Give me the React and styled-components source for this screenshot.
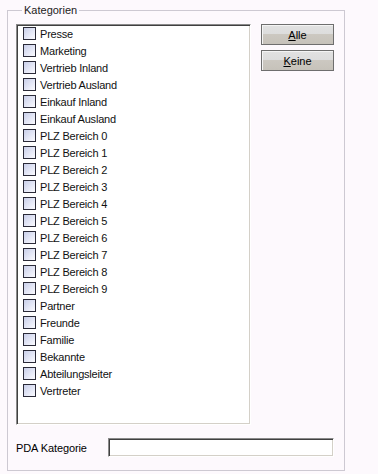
import React from 'react';
import styled, { createGlobalStyle } from 'styled-components';

const GlobalStyle = createGlobalStyle`
  html, body {
    margin: 0;
    padding: 0;
    background: #fdf9fd;
  }
  body {
    font-family: "Liberation Sans", Arial, sans-serif;
    font-size: 11px;
    color: #000;
  }
`;

const Page = styled.div`
  width: 378px;
  height: 474px;
  padding: 4px 0 0 7px;
  box-sizing: border-box;
`;

const GroupBox = styled.fieldset`
  margin: 0;
  width: 338px;
  height: 467px;
  box-sizing: border-box;
  border: 1px solid #cdc9d2;
  padding: 7px 10px 13px 8px;
  display: flex;
  flex-direction: column;
  min-width: 0;
`;

const Legend = styled.legend`
  padding: 0 2px;
  margin-left: 6px;
  line-height: 13px;
  font-size: 11px;
  color: #222;
`;

const TopRow = styled.div`
  display: flex;
  gap: 10px;
  flex: 1;
  min-height: 0;
`;

const sunken = `
  background: #fff;
  border-style: solid;
  border-width: 1px;
  border-color: #8a8a8a #ffffff #ffffff #8a8a8a;
  box-shadow: inset 1px 1px 0 #404040, inset -1px -1px 0 #d4d0c8;
  box-sizing: border-box;
`;

const ListBox = styled.div`
  ${sunken}
  width: 235px;
  height: 401px;
  padding: 0 0 0 6px;
  display: flex;
  flex-direction: column;
`;

const Item = styled.label`
  display: flex;
  align-items: center;
  height: 17px;
  gap: 4px;
  white-space: nowrap;
  letter-spacing: -0.2px;
  color: #111;
`;

const Box = styled.span`
  width: 13px;
  height: 13px;
  box-sizing: border-box;
  border: 1px solid #2a2a38;
  background: linear-gradient(135deg, #c9cfe9 0%, #e4e7f6 55%, #fbfbff 100%);
  flex-shrink: 0;
`;

const ButtonColumn = styled.div`
  display: flex;
  flex-direction: column;
  gap: 5px;
`;

const Button = styled.button`
  width: 73px;
  height: 21px;
  margin: 0;
  padding: 0;
  box-sizing: border-box;
  border: 1px solid #6e6e6e;
  box-shadow: inset 1px 1px 0 #f4f4f4;
  background: linear-gradient(to bottom, #e2e2e2 0%, #dcdcdc 50%, #ccc8c1 50%, #c6c2ba 100%);
  font-family: "Liberation Sans", Arial, sans-serif;
  font-size: 11px;
  color: #000;
  cursor: pointer;

  u {
    text-decoration: underline;
    text-underline-offset: 1px;
  }
`;

const BottomRow = styled.div`
  display: flex;
  align-items: center;
  margin-top: 13px;
`;

const FieldLabel = styled.span`
  width: 92px;
  letter-spacing: -0.1px;
`;

const TextInput = styled.input`
  ${sunken}
  width: 226px;
  height: 19px;
  margin: 0;
  padding: 0 3px;
  font-family: "Liberation Sans", Arial, sans-serif;
  font-size: 11px;
  outline: none;
`;

const categories = [
  'Presse',
  'Marketing',
  'Vertrieb Inland',
  'Vertrieb Ausland',
  'Einkauf Inland',
  'Einkauf Ausland',
  'PLZ Bereich 0',
  'PLZ Bereich 1',
  'PLZ Bereich 2',
  'PLZ Bereich 3',
  'PLZ Bereich 4',
  'PLZ Bereich 5',
  'PLZ Bereich 6',
  'PLZ Bereich 7',
  'PLZ Bereich 8',
  'PLZ Bereich 9',
  'Partner',
  'Freunde',
  'Familie',
  'Bekannte',
  'Abteilungsleiter',
  'Vertreter',
];

function App() {
  return (
    <Page>
      <GlobalStyle />
      <GroupBox>
        <Legend>Kategorien</Legend>
        <TopRow>
          <ListBox>
            {categories.map((c) => (
              <Item key={c}>
                <Box />
                {c}
              </Item>
            ))}
          </ListBox>
          <ButtonColumn>
            <Button><u>A</u>lle</Button>
            <Button><u>K</u>eine</Button>
          </ButtonColumn>
        </TopRow>
        <BottomRow>
          <FieldLabel>PDA Kategorie</FieldLabel>
          <TextInput type="text" />
        </BottomRow>
      </GroupBox>
    </Page>
  );
}

export default App;
